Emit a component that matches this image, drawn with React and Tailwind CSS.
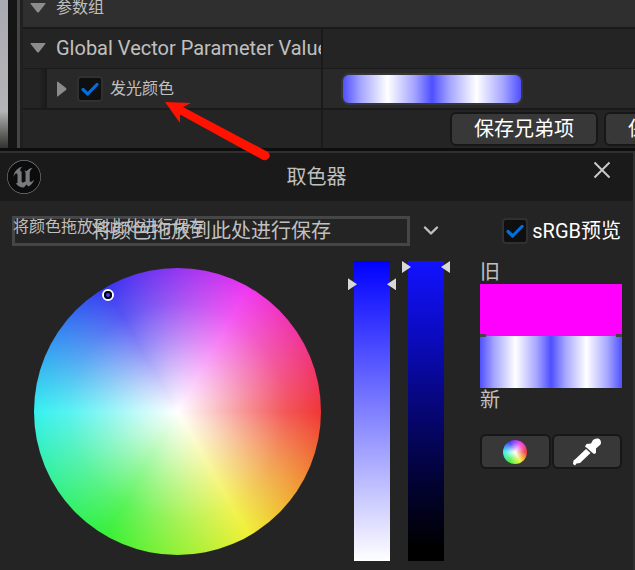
import { useState } from "react";
import { SiUnrealengine } from "react-icons/si";

function Tick() {
  return (
    <svg viewBox="0 0 24 24" className="pointer-events-none col-start-1 row-start-1 hidden size-6 peer-checked:block" fill="none" stroke="#0070e0" strokeWidth="3.2" strokeLinecap="round" strokeLinejoin="round">
      <path d="M5 12.5L9.700 17L19 7.500" />
    </svg>
  );
}

function CheckBox({ id }) {
  return (
    <span className="grid size-[26px] shrink-0 place-items-center">
      <input
        id={id}
        type="checkbox"
        defaultChecked
        className="peer col-start-1 row-start-1 size-[26px] appearance-none rounded border-2 border-[#303030] bg-[#0f0f0f]"
      />
      <Tick />
    </span>
  );
}

function Expander({ open, label }) {
  return (
    <button type="button" aria-label={label} aria-expanded={Boolean(open)} className="flex w-4 shrink-0 justify-center text-[#8c8c8c]">
      {open ? (
        <svg width="16" height="10" viewBox="0 0 16 10" fill="currentColor">
          <path d="M1 0H15Q16 0 15.3 1L9 9Q8 10 7 9L.7 1Q0 0 1 0Z" />
        </svg>
      ) : (
        <svg width="10" height="16" viewBox="0 0 10 16" fill="currentColor">
          <path d="M0 1V15Q0 16 1 15.3L9 9Q10 8 9 7L1 .7Q0 0 0 1Z" />
        </svg>
      )}
    </button>
  );
}

const toolButton = "rounded-md border-2 border-[#171717] bg-[#383838]";

const wheelFill =
  "bg-[radial-gradient(closest-side,#fff,rgba(255,255,255,0.72)_25%,rgba(255,255,255,0.43)_50%,rgba(255,255,255,0.17)_75%,rgba(255,255,255,0)),conic-gradient(from_90deg,#f03636,#f0f036,#36f036,#36f0f0,#3636f0,#f036f0,#f03636)]";

const glowFill =
  "bg-[linear-gradient(90deg,#5050ff,#a5a5ff_10%,#fff_25%,#a5a5ff_40%,#4f4fff_50%,#a5a5ff_60%,#fff_75%,#a5a5ff_90%,#5050ff)]";

function Details() {
  return (
    <section className="flex h-[148px] overflow-hidden bg-[#151515]">
      <div className="w-2 shrink-0 bg-linear-to-b from-[#a9aab1] from-0% via-[#b5b5b8] via-75% to-[#33342e]" />
      <div className="ml-[9px] w-[3px] shrink-0 bg-[#454545]" />
      <div className="w-[3px] shrink-0 bg-[#202020]" />
      <div className="min-w-0 flex-1 text-[#c0c0c0]">
        <div className="flex h-[29px] items-center border-b-2 border-[#1a1a1a] bg-[#2f2f2f] pb-3 pl-[7px]">
          <Expander open label="参数组" />
          <h2 className="ml-[10px] text-base leading-5">参数组</h2>
        </div>
        <div className="flex h-10 border-b border-[#1a1a1a] bg-[#242424]">
          <div className="flex w-[300px] shrink-0 items-center overflow-hidden border-r-2 border-[#1a1a1a] pb-0.5 pl-[7px]">
            <Expander open label="Global Vector Parameter Values" />
            <h3 className="ml-[10px] text-xl whitespace-nowrap">Global Vector Parameter Values</h3>
          </div>
        </div>
        <div className="flex h-[41px] border-b-2 border-[#1a1a1a] bg-[#292929]">
          <div className="flex w-[300px] shrink-0 items-center border-r-2 border-[#1a1a1a]">
            <div className="h-full w-6 bg-linear-to-r from-[#242424] from-65% to-[#191919]" />
            <div className="flex items-center pl-[7px]">
              <Expander label="发光颜色" />
              <div className="ml-[7px] flex items-center gap-[7px]">
                <CheckBox id="glow" />
                <label htmlFor="glow" className="text-base leading-5">发光颜色</label>
              </div>
            </div>
          </div>
          <button
            type="button"
            aria-label="发光颜色"
            className="mt-1 ml-[18px] h-8 w-[182px] rounded-lg border border-[#363636] bg-[#363636] p-px"
          >
            <span className={"block h-full rounded-md " + glowFill} />
          </button>
        </div>
        <div className="flex h-[38px] bg-[#242424]">
          <div className="w-[300px] shrink-0 border-r-2 border-[#1a1a1a]" />
          <div className="ml-[127px] flex items-center gap-[6px] text-xl text-white">
            <button type="button" className={toolButton + " h-[34px] shrink-0 px-[22px] leading-7 whitespace-nowrap"}>保存兄弟项</button>
            <button type="button" className={toolButton + " h-[34px] shrink-0 px-[22px] leading-7 whitespace-nowrap"}>保存子项</button>
          </div>
        </div>
      </div>
    </section>
  );
}

function Wheel() {
  return (
    <div className={"relative size-[287px] shrink-0 rounded-full " + wheelFill}>
      <div className="absolute top-[21px] left-[68px] size-3 rounded-full border-2 border-white">
        <div className="size-2 rounded-full border-2 border-black" />
      </div>
    </div>
  );
}

const sliderBase =
  "h-[300px] w-12 appearance-none bg-size-[36px_100%] bg-center bg-no-repeat [direction:rtl] [writing-mode:vertical-lr] [&::-webkit-slider-thumb]:h-3 [&::-webkit-slider-thumb]:w-12 [&::-webkit-slider-thumb]:appearance-none [&::-webkit-slider-thumb]:bg-[#d8d8d8] [&::-webkit-slider-thumb]:[clip-path:polygon(0_0,9px_50%,0_100%,0_0,48px_0,39px_50%,48px_100%,48px_0)]";

function Sliders() {
  const [saturation, setSaturation] = useState(94);
  const [value, setValue] = useState(100);
  return (
    <div className="mt-px ml-[27px] flex shrink-0 gap-[6px]">
      <input
        type="range"
        aria-label="饱和度"
        value={saturation}
        onChange={(e) => setSaturation(Number(e.target.value))}
        className={sliderBase + " bg-[linear-gradient(#0000ff,#ffffff)]"}
      />
      <input
        type="range"
        aria-label="明度"
        value={value}
        onChange={(e) => setValue(Number(e.target.value))}
        className={sliderBase + " bg-[linear-gradient(#1212ff,#0b0bc0_25%,#060674_50%,#020230_75%,#000_96%)]"}
      />
    </div>
  );
}

function Compare() {
  return (
    <div className="ml-auto w-[142px] shrink-0 text-xl leading-6 text-[#c0c0c0]">
      <div>旧</div>
      <div className="relative">
        <div className="h-[52px] bg-[#ff00ff]" />
        <div className={"h-[52px] " + glowFill} />
        <div className="absolute top-[50px] flex h-[3px] w-full justify-between">
          <span className="w-[6px] bg-[#454545]" />
          <span className="w-[6px] bg-[#454545]" />
        </div>
      </div>
      <div>新</div>
      <div className="mt-[22px] flex gap-px">
        <button type="button" aria-label="色轮" className={toolButton + " flex h-[35px] flex-1 items-center justify-center"}>
          <span className={"size-6 rounded-full " + wheelFill} />
        </button>
        <button type="button" aria-label="吸管" className={toolButton + " flex h-[35px] flex-1 items-center justify-center"}>
          <svg width="28" height="28" viewBox="0 0 28 28" fill="#fff">
            <path d="M20 2Q22 0 25 .5Q28 1 28 5L27.500 6.500L23 10.500V15L21 16L18.500 14L14.500 10.500L12 8.500L13.500 6L18 5.500Z" />
            <path d="M13 11L17.500 15L7 25L3.500 25.500L2 27.500L0 26L.5 22.500L2.500 21Z" />
          </svg>
        </button>
      </div>
    </div>
  );
}

function Picker() {
  return (
    <section className="flex-1 border-t-2 border-r-2 border-[#303030] bg-[#242424]">
      <header className="grid h-12 grid-cols-[1fr_auto_1fr] items-center bg-[#1a1a1a]">
        <span className="ml-[7px] flex size-[34px] items-center justify-center rounded-full bg-[#0c0c0c] text-[#777b7d]">
          <SiUnrealengine className="size-[34px]" />
        </span>
        <h1 className="text-xl leading-6 text-[#c0c0c0]">取色器</h1>
        <button type="button" aria-label="关闭" className="mr-[22px] mb-[14px] justify-self-end">
          <svg width="18" height="18" viewBox="0 0 18 18" fill="none" stroke="#c8c8c8" strokeWidth="2">
            <path d="M1.500 1.500L16.500 16.500M16.500 1.500L1.500 16.500" />
          </svg>
        </button>
      </header>
      <div className="flex items-center pt-[15px] pr-3 pl-3 text-xl">
        <div className="relative h-[30px] min-w-0 flex-1 border-[3px] border-[#464646] text-center leading-6 text-[#c0c0c0]">
          <span>将颜色拖放到此处进行保存</span>
          <span className="absolute -top-0.5 -left-0.5 text-base leading-5 whitespace-nowrap">将颜色拖放到此处进行保存</span>
        </div>
        <button type="button" aria-label="展开" className="ml-3 flex w-[18px] justify-center">
          <svg width="16" height="10" viewBox="0 0 16 10" fill="none" stroke="#c0c0c0" strokeWidth="2.4" strokeLinecap="round" strokeLinejoin="round">
            <path d="M2 1.500L8 7.500L14 1.500" />
          </svg>
        </button>
        <div className="ml-[62px] flex items-center gap-1">
          <CheckBox id="srgb" />
          <label htmlFor="srgb" className="leading-6 whitespace-nowrap text-white">sRGB预览</label>
        </div>
      </div>
      <div className="flex items-start pt-[14px] pr-[11px] pb-2 pl-[34px]">
        <div className="mt-2"><Wheel /></div>
        <Sliders />
        <Compare />
      </div>
    </section>
  );
}

export default function App() {
  return (
    <main className="relative flex min-h-screen flex-col overflow-hidden bg-[#242424] font-[Roboto,'Noto_Sans_CJK_SC',sans-serif]">
      <Details />
      <div className="h-[3px] bg-[#0e0e0e]" />
      <Picker />
      <svg className="pointer-events-none absolute top-[100px] left-[164px]" width="108" height="62" viewBox="0 0 108 62">
        <path d="M1 2L27 3L19 7L104 52Q107 55 105 58Q102 61 99 60L16 14.500L16 23Z" fill="#ff1200" />
      </svg>
    </main>
  );
}
